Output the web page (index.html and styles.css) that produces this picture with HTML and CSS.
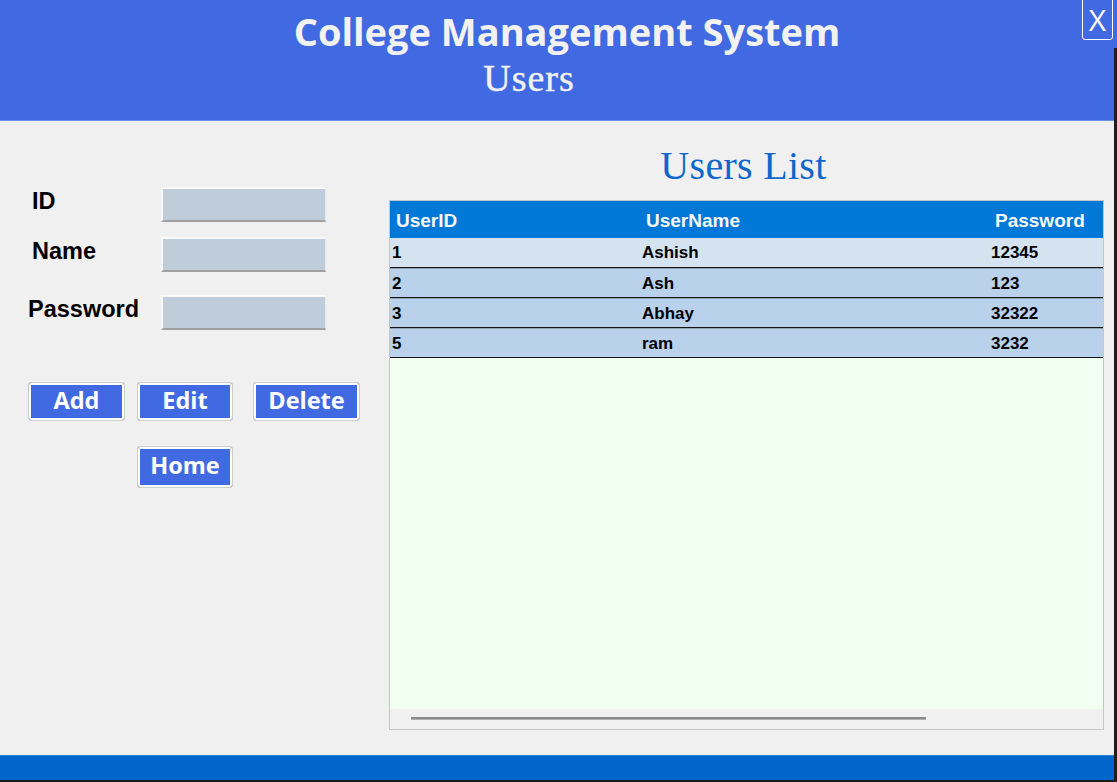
FILE: index.html
```html
<!DOCTYPE html>
<html lang="en">
<head>
<meta charset="utf-8">
<title>College Management System - Users</title>
<link rel="stylesheet" href="styles.css">
</head>
<body>
<div class="window">
  <div class="frame">
    <header class="header">
      <h1 class="title">College Management System</h1>
      <h2 class="subtitle">Users</h2>
      <button class="close" type="button">X</button>
    </header>
    <main class="main">
      <section class="form-panel">
        <div class="field field-id">
          <label class="lbl">ID</label>
          <div class="input"></div>
        </div>
        <div class="field field-name">
          <label class="lbl">Name</label>
          <div class="input"></div>
        </div>
        <div class="field field-pass">
          <label class="lbl lbl-pass">Password</label>
          <div class="input"></div>
        </div>
        <div class="btn-row">
          <button class="btn btn-add" type="button">Add</button>
          <button class="btn btn-edit" type="button">Edit</button>
          <button class="btn btn-delete" type="button">Delete</button>
        </div>
        <div class="btn-row2">
          <button class="btn btn-home" type="button">Home</button>
        </div>
      </section>
      <section class="list-panel">
        <h3 class="list-title">Users List</h3>
        <div class="grid">
          <div class="grid-head">
            <div class="c1">UserID</div>
            <div class="c2">UserName</div>
            <div class="c3">Password</div>
          </div>
          <div class="grid-row first">
            <div class="c1">1</div>
            <div class="c2">Ashish</div>
            <div class="c3">12345</div>
          </div>
          <div class="grid-row">
            <div class="c1">2</div>
            <div class="c2">Ash</div>
            <div class="c3">123</div>
          </div>
          <div class="grid-row">
            <div class="c1">3</div>
            <div class="c2">Abhay</div>
            <div class="c3">32322</div>
          </div>
          <div class="grid-row">
            <div class="c1">5</div>
            <div class="c2">ram</div>
            <div class="c3">3232</div>
          </div>
          <div class="grid-empty"></div>
          <div class="hscroll"><div class="thumb"></div></div>
        </div>
      </section>
    </main>
    <footer class="footer"></footer>
  </div>
  <div class="edge"></div>
</div>
</body>
</html>
```

FILE: styles.css
```css
* { box-sizing: border-box; }
html, body { margin: 0; padding: 0; }
body {
  width: 1117px;
  height: 782px;
  overflow: hidden;
  background: #f0f0f0;
  font-family: "Liberation Sans", Arial, sans-serif;
}
.window {
  display: flex;
  width: 1117px;
  height: 782px;
}
.frame {
  width: 1114px;
  display: flex;
  flex-direction: column;
  border-bottom: 2px solid #1b1b1b;
}
.edge {
  width: 3px;
  background: linear-gradient(#4169e1 0, #4169e1 48px, #1e1e1e 48px);
}

/* header */
.header {
  position: relative;
  height: 121px;
  background: #4169e1;
  border-bottom: 1px solid #6f8ee9;
  display: flex;
  flex-direction: column;
  align-items: center;
  padding-top: 9px;
}
.title {
  margin: 0 0 0 20px;
  font-family: "Open Sans", sans-serif;
  font-weight: 700;
  font-size: 38px;
  line-height: 44px;
  color: #f2f2f2;
  letter-spacing: 0;
}
.subtitle {
  margin: 5px 56px 0 0;
  font-family: "Liberation Serif", "Times New Roman", serif;
  font-weight: 400;
  font-size: 38px;
  line-height: 40px;
  color: #f2f2f2;
  letter-spacing: 1px;
  -webkit-text-stroke: 0.4px #f2f2f2;
}
.close {
  position: absolute;
  left: 1082px;
  top: -2px;
  width: 31px;
  height: 42px;
  padding: 0;
  background: #4169e1;
  border: 1px solid #ffffff;
  border-radius: 0 0 3px 3px;
  color: #ffffff;
  font-family: "Open Sans", sans-serif;
  font-size: 30px;
  line-height: 38px;
  padding-top: 1px;
}

/* main */
.main {
  flex: 1;
  display: flex;
}
.form-panel {
  width: 389px;
  padding-top: 66px;
  display: flex;
  flex-direction: column;
}
.field {
  display: grid;
  grid-template-columns: 161px 165px;
  height: 35px;
}
.field-name { margin-top: 15px; }
.field-pass { margin-top: 23px; }
.lbl {
  padding-left: 32px;
  margin-top: 3px;
  font-weight: 700;
  font-size: 23.5px;
  line-height: 23px;
  color: #000;
}
.lbl-pass { padding-left: 28px; margin-top: 3px; }
.input {
  height: 35px;
  background: #bfcddb;
  border-top: 2px solid #fafafa;
  border-left: 2px solid #fafafa;
  border-right: 1px solid #e8e8e8;
  border-bottom: 2px solid #a0a0a0;
}

.btn-row {
  display: flex;
  margin-top: 52px;
  padding-left: 28px;
}
.btn {
  height: 39px;
  border: 1px solid #cdcdcd;
  border-radius: 3px;
  background: #4169e1;
  box-shadow: inset 0 0 0 2px #ffffff;
  color: #ffffff;
  font-family: "Open Sans", sans-serif;
  font-weight: 700;
  font-size: 23.5px;
  line-height: 32px;
  padding: 0 0 4px 0;
}
.btn-add { width: 97px; }
.btn-edit { width: 96px; margin-left: 12px; }
.btn-delete { width: 107px; margin-left: 20px; }
.btn-row2 {
  display: flex;
  margin-top: 25px;
  padding-left: 137px;
}
.btn-home { width: 96px; height: 42px; }

/* list */
.list-panel {
  width: 715px;
  padding-top: 22px;
  display: flex;
  flex-direction: column;
}
.list-title {
  margin: 0 6px 0 0;
  text-align: center;
  font-family: "Liberation Serif", "Times New Roman", serif;
  font-weight: 400;
  font-size: 40px;
  line-height: 46px;
  color: #0f66cc;
  letter-spacing: 0.3px;
}
.grid {
  margin-top: 11px;
  height: 530px;
  border: 1px solid #c6c6c6;
  display: flex;
  flex-direction: column;
  background: #f0fff0;
}
.grid-head, .grid-row {
  display: grid;
  grid-template-columns: 250px 349px 1fr;
}
.grid-head {
  height: 37px;
  background: #0078d7;
  color: #f7f7f7;
  font-weight: 700;
  font-size: 19px;
  line-height: 39px;
}
.grid-head > div { padding-left: 6px; }
.grid-row {
  height: 30px;
  background: #b9d1ea;
  border-top: 1px solid #8fa1b4;
  border-bottom: 1px solid #141414;
  font-weight: 700;
  font-size: 17px;
  line-height: 29px;
  color: #000;
}
.grid-row.first {
  background: #d5e3f1;
  border-top: 0;
  line-height: 30px;
}
.grid-row > div { padding-left: 2px; }
.grid-empty { flex: 1; }
.hscroll {
  height: 20px;
  background: #f0f0f0;
  padding-top: 8px;
  padding-left: 21px;
}
.thumb {
  width: 515px;
  height: 3px;
  background: #8a8a8a;
  border-bottom: 1px solid #b0b0b0;
}

.footer {
  height: 25px;
  background: #0066cc;
  border-top: 1px solid #2c80da;
}
```
